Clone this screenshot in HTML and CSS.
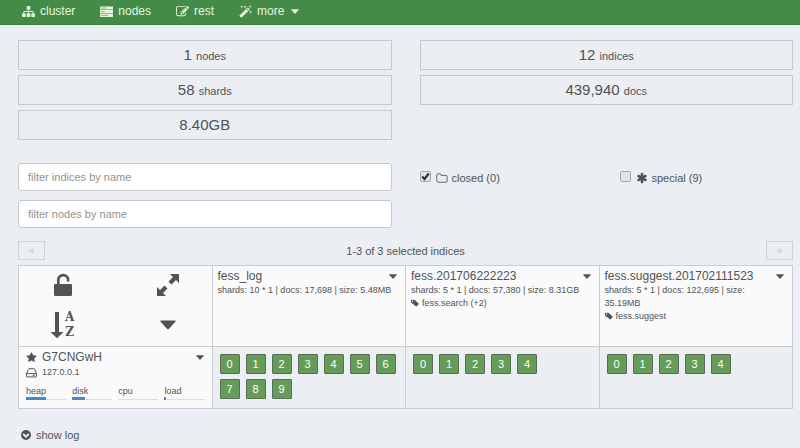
FILE: index.html
```html
<!DOCTYPE html>
<html lang="en">
<head>
<meta charset="utf-8">
<title>Cluster overview</title>
<link rel="stylesheet" href="styles.css">
</head>
<body>
<svg class="defs" aria-hidden="true">
  <symbol id="sitemap" viewBox="0 0 1792 1792"><path d="M1792 1248v320q0 40-28 68t-68 28h-320q-40 0-68-28t-28-68v-320q0-40 28-68t68-28h96v-192h-512v192h96q40 0 68 28t28 68v320q0 40-28 68t-68 28h-320q-40 0-68-28t-28-68v-320q0-40 28-68t68-28h96v-192h-512v192h96q40 0 68 28t28 68v320q0 40-28 68t-68 28h-320q-40 0-68-28t-28-68v-320q0-40 28-68t68-28h96v-192q0-52 38-90t90-38h512v-192h-96q-40 0-68-28t-28-68v-320q0-40 28-68t68-28h320q40 0 68 28t28 68v320q0 40-28 68t-68 28h-96v192h512q52 0 90 38t38 90v192h96q40 0 68 28t28 68z"/></symbol>
  <symbol id="server" viewBox="0 0 14 14"><path d="M0 1.500h14v3.300H0zM0 5.500h14v3.300H0zM0 9.500h14v3.300H0z"/><path d="M1 3.200h6M1 7.200h4M1 11.200h8" fill="none" stroke="#448b48" stroke-width=".6"/></symbol>
  <symbol id="edit" viewBox="0 0 1792 1792"><path d="M888 1184l116-116-152-152-116 116v56h96v96h56zm440-720q-16-16-33 1l-350 350q-17 17-1 33t33-1l350-350q17-17 1-33zm80 594v190q0 119-84.5 203.5t-203.5 84.5h-832q-119 0-203.5-84.5t-84.5-203.5v-832q0-119 84.5-203.5t203.5-84.5h832q63 0 117 25 15 7 18 23 3 17-9 29l-49 49q-14 14-32 8-23-6-45-6h-832q-66 0-113 47t-47 113v832q0 66 47 113t113 47h832q66 0 113-47t47-113v-126q0-13 9-22l64-64q15-15 35-7t20 29zm-96-738l288 288-672 672h-288v-288zm444 132l-92 92-288-288 92-92q28-28 68-28t68 28l152 152q28 28 28 68t-28 68z"/></symbol>
  <symbol id="magic" viewBox="0 0 14 14"><path d="M.3 11.500 9.500 2.300l2.300 2.300-9.200 9.200zM8.400 5.100l.8.800 1.200-1.200-.8-.8z" fill-rule="evenodd"/><path d="m3 .3.5 1.200 1.200.5-1.200.5L3 3.700l-.5-1.200L1.300 2l1.200-.5zM6.500 0l.5 1.500 1.500.5-1.500.5-.5 1.500L6 2.500 4.500 2 6 1.500zM12 0l.5 1 1.200.5-1.200.5L12 3.200l-.5-1.200-1.200-.5 1.200-.5zM12.500 5.800l.5 1.200 1 .5-1 .5-.5 1.200L12 8l-1.200-.5L12 7z"/></symbol>
  <symbol id="caret" viewBox="0 0 8 5"><path d="M.5.300h7q.6.100.2.600L4.400 4.500q-.4.400-.8 0L.3.900Q-.1.400.5.300z"/></symbol>
  <symbol id="folder" viewBox="0 0 14 12"><path d="M1 2.500q0-1.500 1.500-1.500h2q1.500 0 1.500 1.500v.5h5.500q1.500 0 1.500 1.500v5q0 1.500-1.500 1.500h-9Q1 11 1 9.500z" fill="none" stroke="currentColor"/></symbol>
  <symbol id="asterisk" viewBox="0 0 1792 1792"><path d="M1546 1050q46 26 59.500 77.500t-12.500 97.500l-64 110q-26 46-77.500 59.500t-97.500-12.500l-266-153v307q0 52-38 90t-90 38h-128q-52 0-90-38t-38-90v-307l-266 153q-46 26-97.500 12.500t-77.500-59.500l-64-110q-26-46-12.500-97.500t59.500-77.500l266-154-266-154q-46-26-59.500-77.500t12.500-97.500l64-110q26-46 77.500-59.500t97.500 12.500l266 153v-307q0-52 38-90t90-38h128q52 0 90 38t38 90v307l266-153q46-26 97.500-12.500t77.500 59.500l64 110q26 46 12.500 97.500t-59.500 77.500l-266 154z"/></symbol>
  <symbol id="check" viewBox="0 0 11 11"><path d="M2.200 5.500 4.500 8 8.800 2.500" fill="none" stroke="#333" stroke-width="2.200"/></symbol>
  <symbol id="unlock" viewBox="0 0 18 24"><path d="M1.200 11h15.600q1.200 0 1.200 1.200v9.600q0 1.200-1.200 1.200H1.200Q0 23 0 21.800v-9.600Q0 11 1.200 11z"/><path d="M4.300 12V7a4.900 4.900 0 0 1 9.800 0v.5" fill="none" stroke="currentColor" stroke-width="2.600" stroke-linecap="round"/></symbol>
  <symbol id="expand" viewBox="0 0 24 24"><path d="M14 1h8.500q.5 0 .5.500V10l-3-3-4.500 4.500-3-3L17 4zM10 23H1.500q-.5 0-.5-.5V14l3 3 4.500-4.500 3 3L7 20z"/></symbol>
  <symbol id="arrow-down" viewBox="0 0 12 28"><path d="M4 1h4v20h3.500q.8 0 .3.800l-5.300 5q-.5.400-1 0l-5.300-5q-.5-.8.300-.8H4z"/></symbol>
  <symbol id="star" viewBox="0 0 1792 1792"><path d="M1728 647q0 22-26 48l-363 354 86 500q1 7 1 20 0 21-10.500 35.500t-30.500 14.500q-19 0-40-12l-449-236-449 236q-22 12-40 12-21 0-31.500-14.500t-10.500-35.500q0-6 2-20l86-500-364-354q-25-27-25-48 0-37 56-46l502-73 225-455q19-41 49-41t49 41l225 455 502 73q56 9 56 46z"/></symbol>
  <symbol id="disk" viewBox="0 0 10 10"><path d="M.5 6h9v2.500q0 .5-.5.500H1q-.5 0-.5-.5V6l1.700-4q.2-.5.800-.5h4q.6 0 .8.500l1.700 4M6 7.500h2" fill="none" stroke="currentColor" stroke-width=".9"/></symbol>
  <symbol id="tag" viewBox="0 0 10 10"><path d="M0 1.500Q0 1 .5 1H4q.5 0 1 .5l4.500 4q.5.500 0 1L7 9q-.5.500-1 0L.5 4.800Q0 4.600 0 4zM2 2a.8.800 0 1 0 .01 0z" fill-rule="evenodd"/></symbol>
  <symbol id="chevron-circle" viewBox="0 0 12 12"><circle cx="6" cy="6" r="5"/><path d="M3.200 5 6 7.700 8.800 5" fill="none" stroke="#ebeef3" stroke-width="1.800"/></symbol>
</svg>

<nav class="navbar">
  <a href="#cluster"><svg class="icon"><use href="#sitemap"/></svg>cluster</a>
  <a href="#nodes"><svg class="icon"><use href="#server"/></svg>nodes</a>
  <a href="#rest"><svg class="icon"><use href="#edit"/></svg>rest</a>
  <a href="#more"><svg class="icon"><use href="#magic"/></svg>more<svg class="caret"><use href="#caret"/></svg></a>
</nav>

<main class="page">
  <section class="stats">
    <div class="stat">1 <small>nodes</small></div>
    <div class="stat">12 <small>indices</small></div>
    <div class="stat">58 <small>shards</small></div>
    <div class="stat">439,940 <small>docs</small></div>
    <div class="stat">8.40GB</div>
  </section>

  <section class="filters">
    <div class="fields">
      <input type="text" class="field" placeholder="filter indices by name" aria-label="filter indices by name">
      <input type="text" class="field" placeholder="filter nodes by name" aria-label="filter nodes by name">
    </div>
    <div class="checks">
      <label class="check"><span class="box"><input type="checkbox" checked><svg class="mark"><use href="#check"/></svg></span><svg class="check-icon"><use href="#folder"/></svg>closed (0)</label>
      <label class="check"><span class="box"><input type="checkbox"><svg class="mark"><use href="#check"/></svg></span><svg class="check-icon"><use href="#asterisk"/></svg>special (9)</label>
    </div>
  </section>

  <div class="pager">
    <button type="button" class="page-button" aria-label="previous" disabled>«</button>
    <span>1-3 of 3 selected indices</span>
    <button type="button" class="page-button" aria-label="next" disabled>»</button>
  </div>

  <table class="grid">
    <tr class="head">
      <td>
        <div class="tools">
          <button type="button" aria-label="unlock"><svg class="unlock"><use href="#unlock"/></svg></button>
          <button type="button" aria-label="expand"><svg class="expand"><use href="#expand"/></svg></button>
          <button type="button" class="sort"><svg class="arrow-down"><use href="#arrow-down"/></svg><span class="letters">A<br>Z</span></button>
          <button type="button" aria-label="menu"><svg class="big-caret"><use href="#caret"/></svg></button>
        </div>
      </td>
      <th scope="col">
        <div class="title">fess_log<svg class="caret"><use href="#caret"/></svg></div>
        <div class="meta">shards: 10 * 1 | docs: 17,698 | size: 5.48MB</div>
      </th>
      <th scope="col">
        <div class="title">fess.201706222223<svg class="caret"><use href="#caret"/></svg></div>
        <div class="meta">shards: 5 * 1 | docs: 57,380 | size: 8.31GB</div>
        <div class="meta"><svg class="tag"><use href="#tag"/></svg>fess.search (+2)</div>
      </th>
      <th scope="col">
        <div class="title">fess.suggest.201702111523<svg class="caret"><use href="#caret"/></svg></div>
        <div class="meta">shards: 5 * 1 | docs: 122,695 | size: 35.19MB</div>
        <div class="meta"><svg class="tag"><use href="#tag"/></svg>fess.suggest</div>
      </th>
    </tr>
    <tr class="node">
      <th scope="row">
        <div class="title"><span class="name"><svg class="node-icon"><use href="#star"/></svg>G7CNGwH</span><svg class="caret"><use href="#caret"/></svg></div>
        <div class="address"><svg class="node-icon"><use href="#disk"/></svg>127.0.0.1</div>
        <div class="usage">
          <div>heap<div class="bar"><div class="fill" style="width:49%"></div></div></div>
          <div>disk<div class="bar"><div class="fill" style="width:32%"></div></div></div>
          <div>cpu<div class="bar"></div></div>
          <div>load<div class="bar"><div class="fill" style="width:3%"></div></div></div>
        </div>
      </th>
      <td><div class="shards"><span>0</span><span>1</span><span>2</span><span>3</span><span>4</span><span>5</span><span>6</span><span>7</span><span>8</span><span>9</span></div></td>
      <td><div class="shards"><span>0</span><span>1</span><span>2</span><span>3</span><span>4</span></div></td>
      <td><div class="shards"><span>0</span><span>1</span><span>2</span><span>3</span><span>4</span></div></td>
    </tr>
  </table>

  <button type="button" class="log"><svg class="log-icon"><use href="#chevron-circle"/></svg>show log</button>
</main>
</body>
</html>
```
FILE: styles.css
```css
* { box-sizing: border-box; }
body { margin: 0; background: #ebeef3; color: #505356; font: 11px/16px "Liberation Sans", Arial, sans-serif; }
svg { fill: currentColor; flex: none; }
button { font: inherit; color: inherit; background: none; border: 0; padding: 0; }
.defs { position: absolute; width: 0; height: 0; }

.navbar { display: flex; gap: 25px; height: 25px; padding: 0 22px 2px; align-items: center; background: #448b48; border-bottom: 1px solid #3c7d40; font-size: 12px; }
.navbar a { display: flex; align-items: center; color: #e3f6dc; text-decoration: none; }
.icon { width: 13px; height: 13px; margin-right: 5px; }
.caret { width: 8px; height: 5px; }
.navbar .caret { margin-left: 7px; }

.page { padding: 15px 7px 0 18px; }
.stats { display: grid; grid-template-columns: 1fr 1fr; gap: 5px 28px; }
.stat { height: 30px; border: 1px solid #c6cad0; text-align: center; font-size: 15px; line-height: 28px; }
.stat small { font-size: 11px; }

.filters { display: grid; grid-template-columns: 1fr 1fr; gap: 28px; margin-top: 23px; }
.fields { display: grid; gap: 9px; }
.field { width: 100%; height: 28px; padding: 0 9px; border: 1px solid #c8c9cc; border-radius: 3px; background: #fff; font: inherit; color: inherit; }
.field::placeholder { color: #929292; }
.checks { display: grid; grid-template-columns: 200px 1fr; align-items: start; padding-top: 7px; }
.check { display: flex; align-items: center; }
.box { display: grid; margin: 0 5px 4px 0; }
.box > * { grid-area: 1 / 1; width: 11px; height: 11px; }
.box input { appearance: none; margin: 0; border: 1px solid #a5a8aa; border-radius: 2px; background: #e3e5e4; }
.mark { visibility: hidden; pointer-events: none; z-index: 1; }
.box input:checked + .mark { visibility: visible; }
.check-icon { width: 12px; height: 12px; margin-right: 4px; }

.pager { display: flex; justify-content: space-between; align-items: center; margin: 13px 0 5px; }
.page-button { width: 27px; height: 19px; border: 1px solid #ced2d8; color: #cbd0d7; font-weight: bold; line-height: 15px; }

.grid { width: 100%; table-layout: fixed; border-collapse: collapse; }
.grid th, .grid td { border: 1px solid #c9ccd1; padding: 3px 5px; vertical-align: top; text-align: left; font-weight: normal; }
.head > *, .node th { background: #fafafa; }
.head { height: 81px; }
.node { height: 62px; }
.grid .title { display: flex; justify-content: space-between; align-items: center; padding-right: 3px; font-size: 12px; line-height: 15px; }
.meta { padding-right: 6px; font-size: 9px; line-height: 13px; }
.tag { width: 8px; height: 8px; margin-right: 3px; vertical-align: -1px; }
.tools { display: grid; grid-template-columns: 1fr 1fr; grid-template-rows: 32px 36px; gap: 6px 28px; }
.tools button { display: flex; align-items: center; justify-content: center; }
.unlock { width: 18px; height: 24px; }
.expand { width: 24px; height: 24px; }
.arrow-down { width: 12px; height: 28px; }
.big-caret { width: 16px; height: 10px; }
.letters { margin-left: 2px; font: bold 12px/15px "DejaVu Serif", serif; }

.name, .address { display: flex; align-items: center; }
.node-icon { width: 11px; height: 11px; margin: 0 5px 0 2px; }
.address { font-size: 9px; line-height: 15px; }
.usage { display: grid; grid-template-columns: repeat(4, 1fr); gap: 6px; margin: 5px 2px 0; font-size: 9px; line-height: 12px; }
.bar { height: 3px; border-bottom: 1px solid #ddd; }
.fill { height: 3px; background: #428bca; }
.shards { display: flex; flex-wrap: wrap; gap: 5px 6px; padding: 4px 0 0 2px; }
.shards span { width: 20px; height: 20px; border: 1px solid #5c6b58; border-radius: 1px; background: #659c59; color: #fff; text-align: center; line-height: 18px; }
.log { display: flex; align-items: center; margin: 18px 0 0 2px; }
.log-icon { width: 12px; height: 12px; margin-right: 4px; }
```
